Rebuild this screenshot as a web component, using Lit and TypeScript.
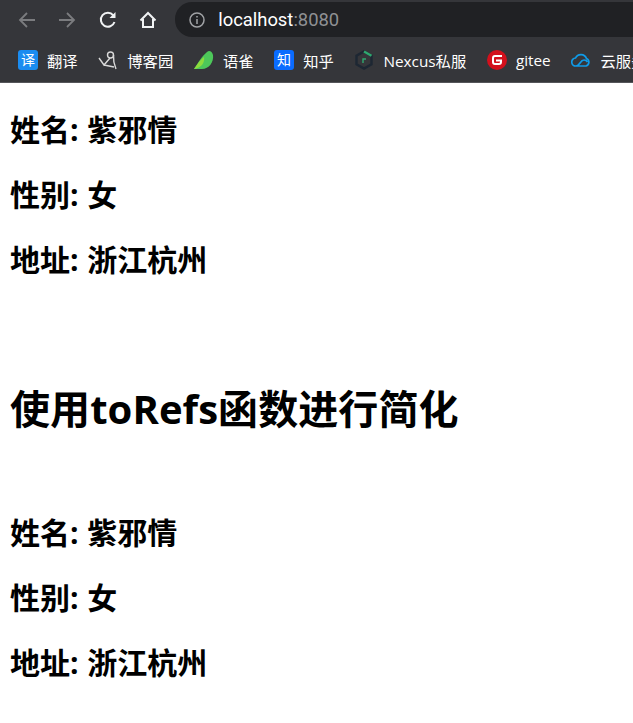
import { LitElement, html, css } from 'lit';
import { customElement } from 'lit/decorators.js';

const cjk = '"Noto Sans CJK SC", "Liberation Sans", sans-serif';

const icons = {
    fanyi: html`<svg width="20" height="20" viewBox="0 0 20 20"><rect width="20" height="20" rx="3" fill="#1a8cf0"/><text x="10" y="15" font-size="14" text-anchor="middle" fill="#fff" font-family=${cjk}>译</text></svg>`,
    cnblogs: html`<svg width="20" height="20" viewBox="0 0 20 20" fill="none" stroke="#d8d8d8" stroke-width="1.4"><circle cx="12.500" cy="5" r="3"/><path d="M15.500 5 Q15 12 18 19 M1 8 L6 15 L12 8 M6 15 L16 17"/></svg>`,
    yuque: html`<svg width="20" height="20" viewBox="0 0 20 20"><path d="M0 19 C4 13 8 6 13 2 C15 0 18 1 19 5 C20 12 15 19 8 19 Z" fill="#4dc85a"/><path d="M0 19 C4 13 7 9 10 7 C11 13 7 18 0 19 Z" fill="#8fdc3c"/></svg>`,
    zhihu: html`<svg width="20" height="20" viewBox="0 0 20 20"><rect width="20" height="20" rx="3" fill="#0a6cff"/><text x="10" y="15" font-size="14" text-anchor="middle" fill="#fff" font-family=${cjk}>知</text></svg>`,
    nexus: html`<svg width="20" height="20" viewBox="0 0 20 20" fill="none"><path d="M10 1.500 L17.500 5.800 V14.200 L10 18.500 L2.500 14.200 V5.800 Z" stroke="#1d2733" stroke-width="2.400"/><path d="M10 1.500 L17.500 5.800" stroke="#2fa86f" stroke-width="2.400"/><path d="M9 13 V9 H12" stroke="#2fa86f" stroke-width="1.400"/></svg>`,
    gitee: html`<svg width="20" height="20" viewBox="0 0 20 20"><circle cx="10" cy="10" r="10" fill="#d3101c"/><path d="M15 5 H8 Q5 5 5 8 V12 Q5 15 8 15 H12 Q15 15 15 12 V9.500 H9 V11.500 H13 V12 Q13 13 12 13 H8 Q7 13 7 12 V8 Q7 7 8 7 H15 Z" fill="#fff"/></svg>`,
    cloud: html`<svg width="20" height="20" viewBox="0 0 20 20" fill="none" stroke="#0f9be8" stroke-width="1.700"><path d="M5 16 H15 A4 4 0 0 0 15.500 8.500 A6 6 0 0 0 4.500 8 A4 4 0 0 0 5 16 Z M5 16 C9 16 9 10 13 10 C15 10 16 11 16.500 12"/></svg>`,
};

const bookmarks = [
    { icon: icons.fanyi, label: '翻译' },
    { icon: icons.cnblogs, label: '博客园' },
    { icon: icons.yuque, label: '语雀' },
    { icon: icons.zhihu, label: '知乎' },
    { icon: icons.nexus, label: 'Nexcus私服' },
    { icon: icons.gitee, label: 'gitee' },
    { icon: icons.cloud, label: '云服务' },
];

const person = [
    ['姓名', '紫邪情'],
    ['性别', '女'],
    ['地址', '浙江杭州'],
];

@customElement('app-root')
export class AppRoot extends LitElement {
    static styles = css`
    :host { display: block; background: #fff; overflow: hidden; height: 723px; font-family: "Open Sans", "Noto Sans CJK SC", sans-serif; }
    .toolbar { height: 37px; background: #35363a; display: flex; align-items: center; padding: 2px 0 0 18px; box-sizing: border-box; }
    .nav { width: 18px; height: 18px; margin-right: 22.3px; flex: none; display: block; }
    .address {
        flex: none; width: 600px; height: 35px; margin-left: -4px; background: #202124; border-radius: 17px;
        display: flex; align-items: center; padding-left: 14px; box-sizing: border-box;
        font: 18.4px "Roboto", "Liberation Sans", sans-serif; color: #fff;
    }
    .address svg { margin-right: 13px; }
    .address span { color: #8f9093; }
    .bookmarks { height: 46px; background: #35363a; display: flex; align-items: center; padding-left: 18px; white-space: nowrap; overflow: hidden; border-bottom: 1px solid #55565a; box-sizing: border-box; }
    .mark { display: flex; align-items: center; flex: none; margin-right: 20.7px; color: #fff; font-size: 15.3px; }
    .mark svg { margin-right: 9px; flex: none; }
    .content { padding: 0 10px; color: #000; }
    h2 { font-size: 30px; line-height: 40px; font-weight: 700; margin: 0 0 25px; word-spacing: 1px; }
    h1 { font-size: 40px; line-height: 56px; font-weight: 700; margin: 0; padding: 76px 0 76px; letter-spacing: 0.07px; }
    .first { padding-top: 27px; }
  `;

    renderPerson(first = false) {
        return html`<div class=${first ? 'first' : ''}>
        ${person.map(([k, v]) => html`<h2>${k}: ${v}</h2>`)}
      </div>`;
    }

    render() {
        return html`
      <div class="toolbar">
        <svg class="nav" viewBox="0 0 18 18" fill="none" stroke="#7b7c7f" stroke-width="1.800"><path d="M17 9 H2 M9 2 L2 9 L9 16"/></svg>
        <svg class="nav" viewBox="0 0 18 18" fill="none" stroke="#7b7c7f" stroke-width="1.800"><path d="M1 9 H16 M9 2 L16 9 L9 16"/></svg>
        <svg class="nav" viewBox="0 0 18 18" fill="none" stroke="#f1f3f4" stroke-width="2"><path d="M15.500 11 A7 7 0 1 1 14.300 4.300"/><path d="M16.500 1 V7 H10.500 Z" fill="#f1f3f4" stroke="none"/></svg>
        <svg class="nav" viewBox="0 0 18 18" fill="none" stroke="#f1f3f4" stroke-width="2"><path d="M1.500 9.500 L9 2 L16.500 9.500 M4 8 V16 H14 V8"/></svg>
        <div class="address">
          <svg width="16" height="16" viewBox="0 0 16 16" fill="none"><circle cx="8" cy="8" r="7" stroke="#a0a2a5" stroke-width="1.500"/><path d="M8 7 V12 M8 4 V5.500" stroke="#a0a2a5" stroke-width="1.500"/></svg>
          localhost<span>:8080</span>
        </div>
      </div>
      <div class="bookmarks">
        ${bookmarks.map(b => html`<div class="mark">${b.icon}${b.label}</div>`)}
      </div>
      <div class="content">
        ${this.renderPerson(true)}
        <h1>使用toRefs函数进行简化</h1>
        ${this.renderPerson()}
      </div>
    `;
    }
}
